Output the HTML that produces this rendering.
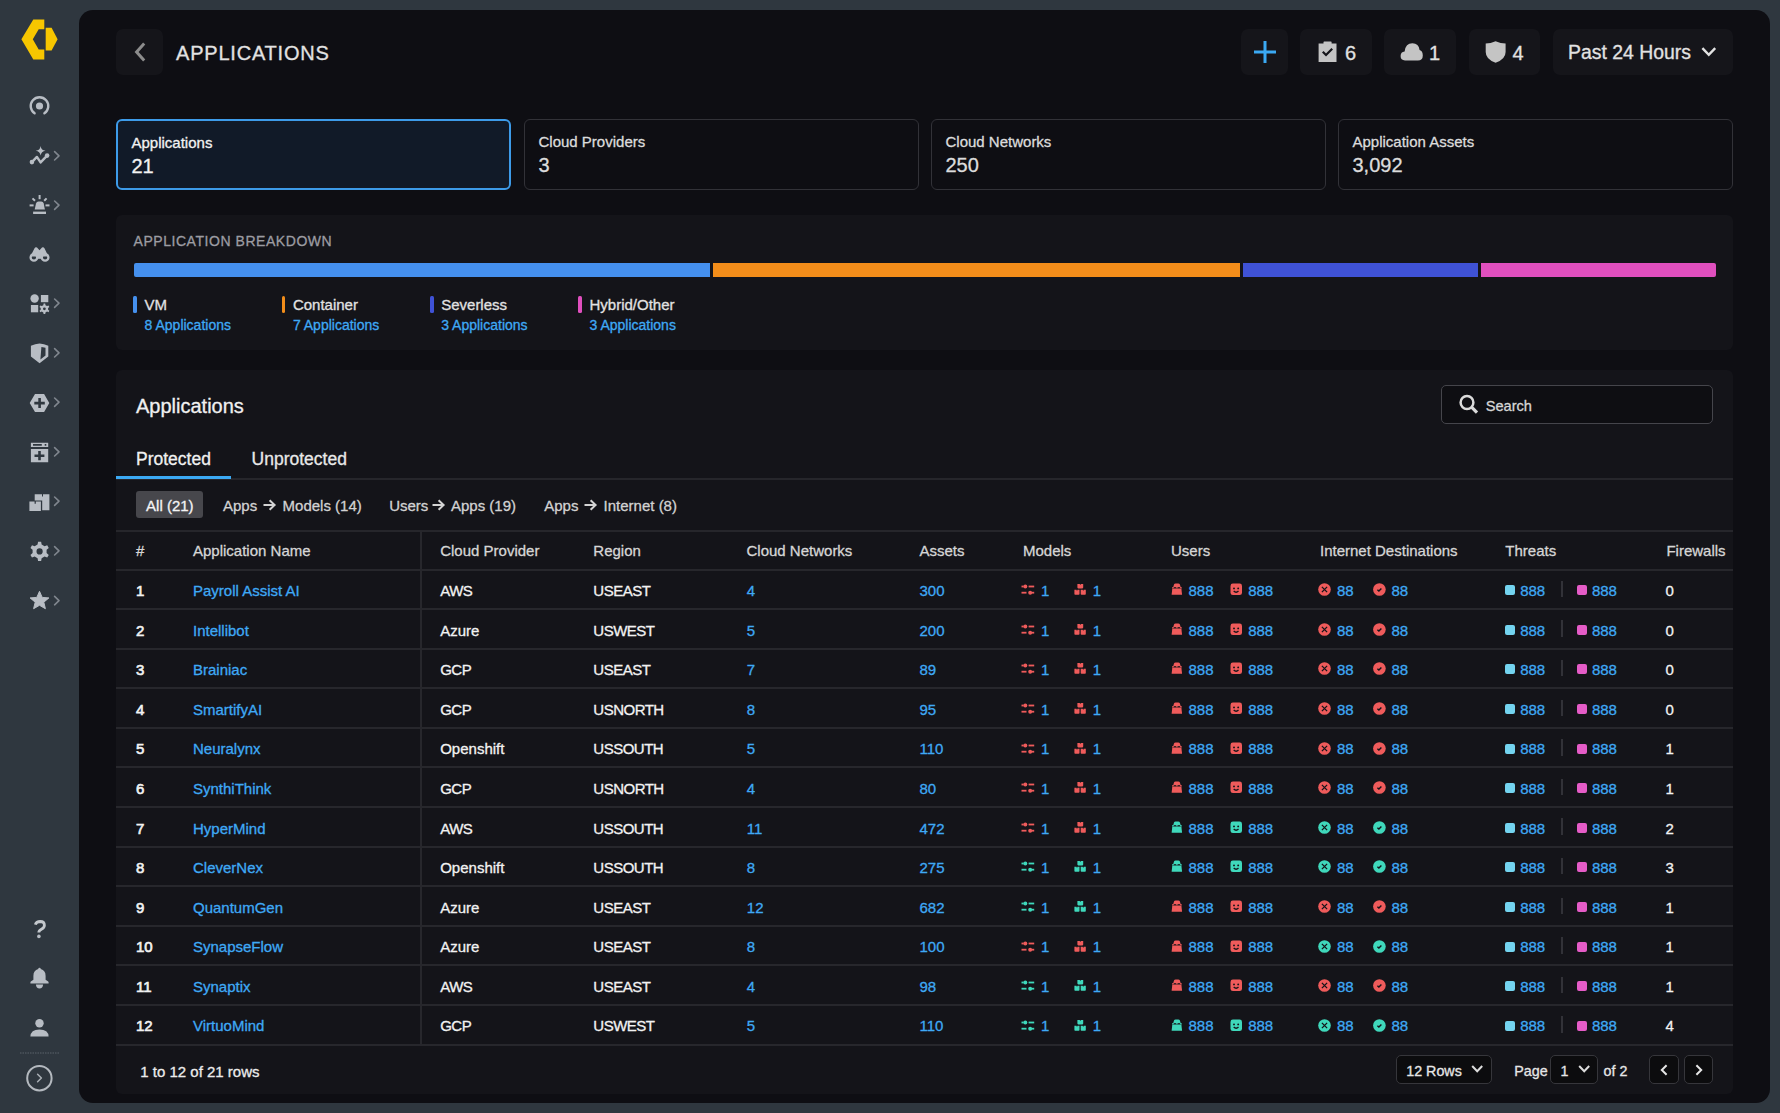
<!DOCTYPE html>
<html><head><meta charset="utf-8">
<style>
*{box-sizing:border-box;margin:0;padding:0}
body{-webkit-text-stroke:0.3px currentColor}
html,body{width:1780px;height:1113px;overflow:hidden;background:#2f373f;font-family:"Liberation Sans",sans-serif;color:#e6e6e6}
.abs{position:absolute}
#main{position:absolute;left:79px;top:10px;width:1691px;height:1093px;background:#0e0e13;border-radius:14px}
.hbtn{position:absolute;top:29px;height:46px;background:#15151a;border-radius:7px}
.htxt{position:absolute;font-size:20px;color:#e2e2e2;line-height:1}
.card{position:absolute;top:118.6px;height:71.8px;width:395px;border:1.5px solid #323238;border-radius:6px;background:#0e0e13}
.card .l{position:absolute;left:13.5px;top:14px;font-size:15px;color:#dcdcdc;line-height:1}
.card .v{position:absolute;left:13.5px;top:35px;font-size:20px;color:#dcdcdc;line-height:1}
.card.sel{border:2px solid #3d9be9;background:#111a28}
.card.sel .l,.card.sel .v{color:#f2f2f2}
.panel{position:absolute;background:#141419;border-radius:6px}
.psel{position:absolute;top:1055px;height:29.3px;border:1.5px solid #36363b;border-radius:5px;background:#0c0c0e}
.ft{top:1064px;font-size:14.3px;line-height:1;color:#e6e6e6;white-space:nowrap}
.chip{top:498px;font-size:15px;line-height:1;color:#d2d2d2;white-space:nowrap}
.th{position:absolute;top:543px;font-size:15px;line-height:1;color:#d6d6d6;white-space:nowrap}
.tr{position:absolute;left:0;width:1780px;height:40px}
.td{position:absolute;top:13.8px;font-size:15px;line-height:1;color:#f2f2f2;white-space:nowrap}
.lk{color:#3fa9f5}
.num{-webkit-text-stroke:0.65px currentColor}
.ic{position:absolute;top:13px;width:14px;height:14px;overflow:visible}
.sq{position:absolute;top:16px;width:10px;height:10px;border-radius:2px}
.dv{position:absolute;left:1561px;top:11.6px;width:1.5px;height:16.4px;background:#323238}
.leg{position:absolute;top:295px;width:140px;height:45px}
.leg i{position:absolute;left:0;top:1px;width:3.6px;height:16.5px;border-radius:1.5px}
.leg b{position:absolute;left:11.2px;top:2px;font-weight:400;font-size:15px;line-height:1;color:#e2e2e2}
.leg s{position:absolute;left:11.2px;top:23px;text-decoration:none;font-size:14px;line-height:1;color:#3fa9f5}

</style></head>
<body>
<svg width="0" height="0" style="position:absolute">
<defs>
<symbol id="i-sl" viewBox="0 0 14 14">
<rect x="0.5" y="3.6" width="2" height="1.8" fill="currentColor"/><circle cx="4.3" cy="4.5" r="2" fill="currentColor"/><rect x="7.6" y="3.6" width="5.6" height="1.8" fill="currentColor"/>
<rect x="0.5" y="9.8" width="5" height="1.8" fill="currentColor"/><circle cx="9.2" cy="10.7" r="2" fill="currentColor"/><rect x="11" y="9.8" width="2.2" height="1.8" fill="currentColor"/>
</symbol>
<symbol id="i-bx" viewBox="0 0 14 14">
<path d="M3.4 1.9 L5.7 1.9 L6.3 3.1 L6.9 1.9 L9.2 1.9 L9.2 5.6 Q9.2 6.4 8.4 6.4 L4.2 6.4 Q3.4 6.4 3.4 5.6Z" fill="currentColor"/>
<path d="M0.4 7.7 L2.5 7.7 L3 8.9 L3.5 7.7 L5.5 7.7 L5.5 11.9 Q5.5 12.7 4.7 12.7 L1.2 12.7 Q0.4 12.7 0.4 11.9Z" fill="currentColor"/>
<path d="M6.7 7.7 L8.7 7.7 L9.2 8.9 L9.7 7.7 L11.8 7.7 L11.8 11.9 Q11.8 12.7 11 12.7 L7.5 12.7 Q6.7 12.7 6.7 11.9Z" fill="currentColor"/>
</symbol>
<symbol id="i-spy" viewBox="0 0 14 14">
<path d="M2.2 5.2 L3 2.6 Q3.4 1.5 4.6 1.5 L7.3 1.5 Q8.5 1.5 8.9 2.6 L9.7 5.2 L10.8 5.3 L10.8 6.6 L1 6.6 L1 5.3Z" fill="currentColor"/>
<path d="M1.3 6.7 L10.4 6.7 L11.1 12.8 L0.6 12.8Z" fill="currentColor"/>
<path d="M2.8 5.7 H5.3 M6.5 5.7 H9" stroke="#141419" stroke-width="1"/>
</symbol>
<symbol id="i-bot" viewBox="0 0 14 14">
<rect x="0.5" y="1.5" width="11.5" height="11.6" rx="2.4" fill="currentColor"/>
<circle cx="4" cy="6.4" r="0.95" fill="#141419"/><circle cx="8.2" cy="6.4" r="0.95" fill="#141419"/>
<path d="M3.7 9 Q6.1 11.4 8.5 9" stroke="#141419" stroke-width="1.3" fill="none"/>
</symbol>
<symbol id="i-x" viewBox="0 0 14 14">
<circle cx="6.5" cy="7.5" r="6.3" fill="currentColor"/>
<path d="M3.9 4.9 L9.1 10.1 M9.1 4.9 L3.9 10.1" stroke="#141419" stroke-width="1.3"/>
</symbol>
<symbol id="i-ok" viewBox="0 0 14 14">
<circle cx="6.4" cy="7.5" r="6.3" fill="currentColor"/>
<path d="M4.4 7.7 L5.9 9 L8.4 6.5" stroke="#141419" stroke-width="1.4" fill="none"/>
</symbol>
</defs></svg>
<!-- SIDEBAR -->
<svg class="abs" style="left:0;top:0" width="80" height="1113" viewBox="0 0 80 1113">
<g fill="#f7c600">
<path d="M21.4 39.2 L33.3 19.4 L44.3 19.4 L44.3 29.3 L38.7 29.3 L32.8 39.2 L38.7 49.6 L44.3 49.6 L44.3 59.5 L33.3 59.5 Z" fill-rule="evenodd"/>
<path d="M45.7 27.8 L51.6 27.8 L57.6 39.2 L51.6 50.6 L45.7 50.6 Z"/>
</g>
<g fill="#b8bdc4" stroke="none">
<!-- radar -->
<path d="M34.6 113.3 A8.8 8.8 0 1 1 44.4 113.3" fill="none" stroke="#b8bdc4" stroke-width="2.4" stroke-linecap="round"/>
<circle cx="39.5" cy="106" r="3.6"/>
<!-- trend sparkle -->
<path d="M40.6 145.9 Q41.2 150.2 45.5 150.8 Q41.2 151.4 40.6 155.6 Q40 151.4 35.8 150.8 Q40 150.2 40.6 145.9Z"/>
<path d="M31.9 162.1 L36.9 156.9 L40.6 162.4 L47.1 155.6" fill="none" stroke="#b8bdc4" stroke-width="2.4" stroke-linejoin="round"/>
<circle cx="31.9" cy="162.1" r="2.3"/><circle cx="47.1" cy="155.6" r="2.3"/>
<!-- alarm -->
<path d="M34.7 209.6 L36 203.5 Q36.5 201.6 38.5 201.6 L41.2 201.6 Q43.2 201.6 43.7 203.5 L44.9 209.6Z"/>
<rect x="33.1" y="211.6" width="12.9" height="2.4"/>
<rect x="38.6" y="195" width="2" height="4.2"/>
<path d="M32.5 198.4 L35 200.8 M46.6 198.4 L44.2 200.8" stroke="#b8bdc4" stroke-width="2"/>
<rect x="29.6" y="204.4" width="4" height="2"/><rect x="45.5" y="204.4" width="4" height="2"/>
<!-- binoculars -->
<path d="M30.6 256 L34.4 248.4 Q35.4 246.6 37 247.4 L39.5 250.2 L42 247.4 Q43.6 246.6 44.6 248.4 L48.4 256.5 L30.6 256.5Z"/>
<path d="M36.6 254 L42.4 254 L42.4 258.8 L36.6 258.8Z"/>
<circle cx="33.9" cy="257.4" r="3.3" fill="none" stroke="#b8bdc4" stroke-width="2.3"/>
<circle cx="45.1" cy="257.4" r="3.3" fill="none" stroke="#b8bdc4" stroke-width="2.3"/>
<!-- shapes gear -->
<circle cx="34.6" cy="298.5" r="4.2"/>
<rect x="40.9" y="295" width="7.4" height="7.2"/>
<rect x="30.9" y="305" width="7.3" height="7.3"/>
<path d="M43.32 305.16 L43.57 303.57 L45.23 303.57 L45.48 305.16 L47.02 306.04 L48.52 305.46 L49.35 306.90 L48.10 307.91 L48.10 309.69 L49.35 310.70 L48.52 312.14 L47.02 311.56 L45.48 312.44 L45.23 314.03 L43.57 314.03 L43.32 312.44 L41.78 311.56 L40.28 312.14 L39.45 310.70 L40.70 309.69 L40.70 307.91 L39.45 306.90 L40.28 305.46 L41.78 306.04Z M44.4 307.4 A1.4 1.4 0 1 0 44.4 310.2 A1.4 1.4 0 1 0 44.4 307.4Z" fill-rule="evenodd"/>
<!-- shield -->
<path d="M39.6 343.6 Q44 344 48.3 345.8 L48.3 356.6 L39.6 363.2 L30.9 356.6 L30.9 345.8 Q35.2 344 39.6 343.6Z M41.4 346.9 L45.5 347.7 L45.5 355.5 L40.4 359.6Z" fill-rule="evenodd"/>
<!-- hex plus -->
<path d="M29.7 403.1 L35 393.9 L44.1 393.9 L49.3 403.1 L44.1 412 L35 412Z M38.3 398 L40.9 398 L40.9 401.8 L44.8 401.8 L44.8 404.4 L40.9 404.4 L40.9 408 L38.3 408 L38.3 404.4 L34.3 404.4 L34.3 401.8 L38.3 401.8Z" fill-rule="evenodd"/>
<!-- window plus -->
<path d="M30.9 442.7 L48.2 442.7 L48.2 447.1 L30.9 447.1Z M33 444.1 L41.8 444.1 L41.8 445.7 L33 445.7Z M44.7 444.1 L46.3 444.1 L46.3 445.7 L44.7 445.7Z" fill-rule="evenodd"/>
<path d="M30.9 449.1 L48.2 449.1 L48.2 462.3 L30.9 462.3Z M38.2 451 L40.8 451 L40.8 454.4 L44.4 454.4 L44.4 457 L40.8 457 L40.8 460.3 L38.2 460.3 L38.2 457 L34.5 457 L34.5 454.4 L38.2 454.4Z" fill-rule="evenodd"/>
<!-- boxes -->
<path d="M34.7 494.3 L42 494.3 L42 496.5 L43 496.5 L43 494.3 L49.4 494.3 L49.4 510.3 L42.2 510.3 L42.2 500.6 L34.7 500.6Z"/>
<path d="M29.4 501.6 L34.6 501.6 L34.6 503.8 L35.8 503.8 L35.8 501.6 L40.9 501.6 L40.9 511 L29.4 511Z"/>
<!-- gear -->
<path d="M37.56 544.50 L38.07 541.72 L41.13 541.72 L41.64 544.50 L44.56 546.18 L47.22 545.23 L48.75 547.89 L46.60 549.72 L46.60 553.08 L48.75 554.91 L47.22 557.57 L44.56 556.62 L41.64 558.30 L41.13 561.08 L38.07 561.08 L37.56 558.30 L34.64 556.62 L31.98 557.57 L30.45 554.91 L32.60 553.08 L32.60 549.72 L30.45 547.89 L31.98 545.23 L34.64 546.18Z M39.6 548.3 A3.1 3.1 0 1 0 39.6 554.5 A3.1 3.1 0 1 0 39.6 548.3Z" fill-rule="evenodd"/>
<!-- star -->
<path d="M39.5 591.3 L42.2 597.4 L48.9 597.9 L43.8 602.2 L45.4 608.7 L39.5 605.3 L33.6 608.7 L35.2 602.2 L30.1 597.9 L36.8 597.4Z" stroke="#b8bdc4" stroke-width="1" stroke-linejoin="round"/>
<!-- help -->
<path d="M35.3 924.6 Q36.4 921.5 40.2 921.5 Q44.4 921.6 44.4 925.2 Q44.4 927.6 41.4 929.2 Q38.8 930.6 38.8 932.6" fill="none" stroke="#c4c8cd" stroke-width="2.8" stroke-linecap="butt"/>
<circle cx="38.9" cy="936.4" r="1.8"/>
<!-- bell -->
<path d="M39.5 967.8 Q40.6 967.8 40.8 969.1 Q45.6 970.4 45.6 976 L45.6 979.8 L48.2 981.6 Q48.6 982 48.6 982.6 L48.6 983.6 L30.4 983.6 L30.4 982.6 Q30.4 982 30.8 981.6 L33.4 979.8 L33.4 976 Q33.4 970.4 38.2 969.1 Q38.4 967.8 39.5 967.8Z"/>
<path d="M35.9 984.6 L43.1 984.6 Q42.8 988.5 39.5 988.5 Q36.2 988.5 35.9 984.6Z"/>
<!-- user -->
<circle cx="39.5" cy="1023.3" r="4.2"/>
<path d="M30.4 1036.6 Q30.6 1029.4 39.5 1029.4 Q48.4 1029.4 48.6 1036.6Z"/>
</g>
<!-- chevrons -->
<g fill="none" stroke="#80868e" stroke-width="1.6" stroke-linecap="round" stroke-linejoin="round">
<path d="M54.6 151.6 L59 155.8 L54.6 160"/>
<path d="M54.6 201 L59 205.2 L54.6 209.4"/>
<path d="M54.6 299 L59 303.2 L54.6 307.4"/>
<path d="M54.6 348.6 L59 352.8 L54.6 357"/>
<path d="M54.6 398 L59 402.2 L54.6 406.4"/>
<path d="M54.6 447.6 L59 451.8 L54.6 456"/>
<path d="M54.6 497 L59 501.2 L54.6 505.4"/>
<path d="M54.6 546.6 L59 550.8 L54.6 555"/>
<path d="M54.6 596.4 L59 600.6 L54.6 604.8"/>
</g>
<line x1="20" y1="1053" x2="59.5" y2="1053" stroke="#5b636b" stroke-width="1" stroke-dasharray="1.5 1"/>
<circle cx="39.4" cy="1078.2" r="12.2" fill="none" stroke="#b4b9bf" stroke-width="2"/>
<path d="M37.6 1074.2 L41.4 1078 L37.6 1081.8" fill="none" stroke="#aab0b6" stroke-width="1.5" stroke-linecap="round" stroke-linejoin="round"/>
</svg>

<!-- MAIN -->
<div id="main"></div>

<!-- header -->
<div class="hbtn" style="left:116px;width:47px"></div>
<svg class="abs" style="left:130px;top:40px" width="20" height="24" viewBox="0 0 20 24"><path d="M14.2 3.6 L6.6 12 L14.2 20.4" stroke="#8c8c8c" stroke-width="3" fill="none"/></svg>
<div class="htxt" style="left:176px;top:43px;letter-spacing:0.8px">APPLICATIONS</div>

<div class="hbtn" style="left:1241px;width:47px"></div>
<svg class="abs" style="left:1253px;top:40px" width="24" height="24" viewBox="0 0 24 24"><path d="M12 1 V23 M1 12 H23" stroke="#3ba9f3" stroke-width="3" fill="none"/></svg>

<div class="hbtn" style="left:1300px;width:72px"></div>
<div class="hbtn" style="left:1384px;width:72px"></div>
<div class="hbtn" style="left:1469px;width:71px"></div>
<div class="hbtn" style="left:1553px;width:180px"></div>
<svg class="abs" style="left:0;top:0;overflow:visible" width="1" height="1">
<g fill="#c4c4c4">
<path d="M1318.6 43.5 L1323.5 43.5 L1323.5 42 Q1323.5 41.4 1324.2 41.4 L1330.9 41.4 Q1331.6 41.4 1331.6 42 L1331.6 43.5 L1336.5 43.5 L1336.5 62 L1318.6 62Z M1322 52.6 L1326 56.6 L1333 49.6 L1331.4 48 L1326 53.4 L1323.6 51Z" fill-rule="evenodd"/>
<path d="M1405 60.4 Q1400.6 60.4 1400.6 56 Q1400.6 51.8 1404.6 51.4 Q1405.6 43.2 1412.4 43.2 Q1418.8 43.2 1419.6 50 Q1422.8 51 1422.8 55.4 Q1422.8 60.4 1417.8 60.4Z"/>
<path d="M1495.6 41.2 Q1500.6 43.4 1505.6 43.6 L1505.6 52 Q1505.6 59.4 1495.6 62.7 Q1485.7 59.4 1485.7 52 L1485.7 43.6 Q1490.6 43.4 1495.6 41.2Z"/>
</g>
</svg>
<div class="htxt" style="left:1345px;top:43px">6</div>
<div class="htxt" style="left:1429px;top:43px">1</div>
<div class="htxt" style="left:1512.5px;top:43px">4</div>
<div class="htxt" style="left:1568px;top:43px;font-size:19.4px">Past 24 Hours</div>
<svg class="abs" style="left:1700px;top:45px" width="18" height="14" viewBox="0 0 18 14"><path d="M2.4 3.2 L8.8 9.8 L15.2 3.2" stroke="#e2e2e2" stroke-width="2.4" fill="none"/></svg>

<!-- cards -->
<div class="card sel" style="left:116px"><div class="l">Applications</div><div class="v">21</div></div>
<div class="card" style="left:524px"><div class="l">Cloud Providers</div><div class="v">3</div></div>
<div class="card" style="left:931px"><div class="l">Cloud Networks</div><div class="v">250</div></div>
<div class="card" style="left:1338px"><div class="l">Application Assets</div><div class="v">3,092</div></div>

<!-- breakdown -->
<div class="panel" style="left:116px;top:215px;width:1617px;height:135px"></div>
<div class="abs" style="left:133.5px;top:234px;font-size:14px;line-height:1;letter-spacing:0.55px;color:#9c9ca2">APPLICATION BREAKDOWN</div>
<div class="abs" style="left:133.5px;top:263.2px;width:576.5px;height:13.6px;background:#4590ee;border-radius:2px 0 0 2px"></div>
<div class="abs" style="left:713px;top:263.2px;width:527px;height:13.6px;background:#f28d1a"></div>
<div class="abs" style="left:1243px;top:263.2px;width:235px;height:13.6px;background:#3f52d6"></div>
<div class="abs" style="left:1481.3px;top:263.2px;width:234.5px;height:13.6px;background:#e04fbe;border-radius:0 2px 2px 0"></div>
<div class="leg" style="left:133.4px"><i style="background:#4590ee"></i><b>VM</b><s>8 Applications</s></div>
<div class="leg" style="left:281.7px"><i style="background:#f28d1a"></i><b>Container</b><s>7 Applications</s></div>
<div class="leg" style="left:430px"><i style="background:#3f52d6"></i><b>Severless</b><s>3 Applications</s></div>
<div class="leg" style="left:578.3px"><i style="background:#e04fbe"></i><b>Hybrid/Other</b><s>3 Applications</s></div>

<!-- applications panel -->
<div class="panel" style="left:116px;top:370px;width:1617px;height:724px"></div>
<div class="abs" style="left:136px;top:395.5px;font-size:20px;line-height:1;color:#f0f0f0">Applications</div>
<div class="abs" style="left:1441.2px;top:384.6px;width:272px;height:39.6px;border:1.5px solid #45454b;border-radius:5px;background:#0e0e12"></div>
<svg class="abs" style="left:1455px;top:391px" width="28" height="28" viewBox="0 0 28 28"><circle cx="12" cy="11.5" r="6.4" fill="none" stroke="#dadada" stroke-width="2.5"/><path d="M16.6 16.2 L22 21.6" stroke="#dadada" stroke-width="3.2" stroke-linecap="butt"/></svg>
<div class="abs" style="left:1485.7px;top:398.5px;font-size:14.6px;line-height:1;color:#d6d6d6">Search</div>
<div class="abs" style="left:116px;top:478px;width:1617px;height:1.5px;background:#26262b"></div>
<div class="abs" style="left:116px;top:476px;width:115px;height:3px;background:#3ba9f3"></div>
<div class="abs" style="left:136px;top:451px;font-size:17.5px;line-height:1;color:#f0f0f0">Protected</div>
<div class="abs" style="left:251.6px;top:451px;font-size:17.5px;line-height:1;color:#e8e8e8">Unprotected</div>
<div class="abs" style="left:136.2px;top:491px;width:66.5px;height:27.2px;background:#47474c;border-radius:3px"></div>
<div class="abs chip" style="left:146.1px;color:#f4f4f4">All (21)</div>
<div class="abs chip" style="left:223px">Apps</div><svg class="abs" style="left:262.8px;top:499px" width="14" height="12" viewBox="0 0 14 12"><path d="M0.5 6 H11.5 M6.6 1.2 L11.6 6 L6.6 10.8" stroke="#d4d4d4" stroke-width="2" fill="none"/></svg><div class="abs chip" style="left:282.6px">Models (14)</div>
<div class="abs chip" style="left:389.2px">Users</div><svg class="abs" style="left:432px;top:499px" width="14" height="12" viewBox="0 0 14 12"><path d="M0.5 6 H11.5 M6.6 1.2 L11.6 6 L6.6 10.8" stroke="#d4d4d4" stroke-width="2" fill="none"/></svg><div class="abs chip" style="left:451px">Apps (19)</div>
<div class="abs chip" style="left:544.2px">Apps</div><svg class="abs" style="left:584px;top:499px" width="14" height="12" viewBox="0 0 14 12"><path d="M0.5 6 H11.5 M6.6 1.2 L11.6 6 L6.6 10.8" stroke="#d4d4d4" stroke-width="2" fill="none"/></svg><div class="abs chip" style="left:603.6px">Internet (8)</div>
<div class="abs" style="left:116px;top:530px;width:1617px;height:1.6px;background:#26262b"></div>
<div class="abs" style="left:116px;top:568.50px;width:1617px;height:2px;background:#27272c"></div>
<div class="abs" style="left:116px;top:608.08px;width:1617px;height:2px;background:#27272c"></div>
<div class="abs" style="left:116px;top:647.67px;width:1617px;height:2px;background:#27272c"></div>
<div class="abs" style="left:116px;top:687.25px;width:1617px;height:2px;background:#27272c"></div>
<div class="abs" style="left:116px;top:726.83px;width:1617px;height:2px;background:#27272c"></div>
<div class="abs" style="left:116px;top:766.41px;width:1617px;height:2px;background:#27272c"></div>
<div class="abs" style="left:116px;top:806.00px;width:1617px;height:2px;background:#27272c"></div>
<div class="abs" style="left:116px;top:845.58px;width:1617px;height:2px;background:#27272c"></div>
<div class="abs" style="left:116px;top:885.16px;width:1617px;height:2px;background:#27272c"></div>
<div class="abs" style="left:116px;top:924.75px;width:1617px;height:2px;background:#27272c"></div>
<div class="abs" style="left:116px;top:964.33px;width:1617px;height:2px;background:#27272c"></div>
<div class="abs" style="left:116px;top:1003.91px;width:1617px;height:2px;background:#27272c"></div>
<div class="abs" style="left:116px;top:1043.50px;width:1617px;height:2px;background:#27272c"></div>
<div class="abs" style="left:420px;top:531px;width:2px;height:513.5px;background:#27272c"></div>
<div class="th" style="left:136px">#</div>
<div class="th" style="left:193px">Application Name</div>
<div class="th" style="left:440.2px">Cloud Provider</div>
<div class="th" style="left:593.3px">Region</div>
<div class="th" style="left:746.5px">Cloud Networks</div>
<div class="th" style="left:919.5px">Assets</div>
<div class="th" style="left:1023px">Models</div>
<div class="th" style="left:1171px">Users</div>
<div class="th" style="left:1320px">Internet Destinations</div>
<div class="th" style="left:1505.3px">Threats</div>
<div class="th" style="left:1666.4px">Firewalls</div>
<div class="tr" style="top:569.29px"><span class="td num" style="left:136px">1</span><span class="td lk" style="left:193px">Payroll Assist AI</span><span class="td" style="left:440.2px;letter-spacing:-0.5px">AWS</span><span class="td" style="left:593.3px;letter-spacing:-0.5px">USEAST</span><span class="td lk" style="left:746.8px">4</span><span class="td lk" style="left:919.5px">300</span><svg class="ic" style="left:1021px;color:#ef5b5b"><use href="#i-sl"/></svg><span class="td lk" style="left:1041px">1</span><svg class="ic" style="left:1073.5px;color:#ef5b5b"><use href="#i-bx"/></svg><span class="td lk" style="left:1092.8px">1</span><svg class="ic" style="left:1170.5px;color:#ef5b5b"><use href="#i-spy"/></svg><span class="td lk" style="left:1188.5px">888</span><svg class="ic" style="left:1229.5px;color:#ef5b5b"><use href="#i-bot"/></svg><span class="td lk" style="left:1248.2px">888</span><svg class="ic" style="left:1318px;color:#ef5b5b"><use href="#i-x"/></svg><span class="td lk" style="left:1337px">88</span><svg class="ic" style="left:1372.5px;color:#ef5b5b"><use href="#i-ok"/></svg><span class="td lk" style="left:1391.4px">88</span><span class="sq" style="left:1505px;background:#74d4f0"></span><span class="td lk" style="left:1520.2px">888</span><span class="dv"></span><span class="sq" style="left:1576.6px;background:#e55cc7"></span><span class="td lk" style="left:1591.9px">888</span><span class="td" style="left:1665.4px">0</span></div>
<div class="tr" style="top:608.87px"><span class="td num" style="left:136px">2</span><span class="td lk" style="left:193px">Intellibot</span><span class="td" style="left:440.2px">Azure</span><span class="td" style="left:593.3px;letter-spacing:-0.5px">USWEST</span><span class="td lk" style="left:746.8px">5</span><span class="td lk" style="left:919.5px">200</span><svg class="ic" style="left:1021px;color:#ef5b5b"><use href="#i-sl"/></svg><span class="td lk" style="left:1041px">1</span><svg class="ic" style="left:1073.5px;color:#ef5b5b"><use href="#i-bx"/></svg><span class="td lk" style="left:1092.8px">1</span><svg class="ic" style="left:1170.5px;color:#ef5b5b"><use href="#i-spy"/></svg><span class="td lk" style="left:1188.5px">888</span><svg class="ic" style="left:1229.5px;color:#ef5b5b"><use href="#i-bot"/></svg><span class="td lk" style="left:1248.2px">888</span><svg class="ic" style="left:1318px;color:#ef5b5b"><use href="#i-x"/></svg><span class="td lk" style="left:1337px">88</span><svg class="ic" style="left:1372.5px;color:#ef5b5b"><use href="#i-ok"/></svg><span class="td lk" style="left:1391.4px">88</span><span class="sq" style="left:1505px;background:#74d4f0"></span><span class="td lk" style="left:1520.2px">888</span><span class="dv"></span><span class="sq" style="left:1576.6px;background:#e55cc7"></span><span class="td lk" style="left:1591.9px">888</span><span class="td" style="left:1665.4px">0</span></div>
<div class="tr" style="top:648.46px"><span class="td num" style="left:136px">3</span><span class="td lk" style="left:193px">Brainiac</span><span class="td" style="left:440.2px;letter-spacing:-0.5px">GCP</span><span class="td" style="left:593.3px;letter-spacing:-0.5px">USEAST</span><span class="td lk" style="left:746.8px">7</span><span class="td lk" style="left:919.5px">89</span><svg class="ic" style="left:1021px;color:#ef5b5b"><use href="#i-sl"/></svg><span class="td lk" style="left:1041px">1</span><svg class="ic" style="left:1073.5px;color:#ef5b5b"><use href="#i-bx"/></svg><span class="td lk" style="left:1092.8px">1</span><svg class="ic" style="left:1170.5px;color:#ef5b5b"><use href="#i-spy"/></svg><span class="td lk" style="left:1188.5px">888</span><svg class="ic" style="left:1229.5px;color:#ef5b5b"><use href="#i-bot"/></svg><span class="td lk" style="left:1248.2px">888</span><svg class="ic" style="left:1318px;color:#ef5b5b"><use href="#i-x"/></svg><span class="td lk" style="left:1337px">88</span><svg class="ic" style="left:1372.5px;color:#ef5b5b"><use href="#i-ok"/></svg><span class="td lk" style="left:1391.4px">88</span><span class="sq" style="left:1505px;background:#74d4f0"></span><span class="td lk" style="left:1520.2px">888</span><span class="dv"></span><span class="sq" style="left:1576.6px;background:#e55cc7"></span><span class="td lk" style="left:1591.9px">888</span><span class="td" style="left:1665.4px">0</span></div>
<div class="tr" style="top:688.04px"><span class="td num" style="left:136px">4</span><span class="td lk" style="left:193px">SmartifyAI</span><span class="td" style="left:440.2px;letter-spacing:-0.5px">GCP</span><span class="td" style="left:593.3px;letter-spacing:-0.5px">USNORTH</span><span class="td lk" style="left:746.8px">8</span><span class="td lk" style="left:919.5px">95</span><svg class="ic" style="left:1021px;color:#ef5b5b"><use href="#i-sl"/></svg><span class="td lk" style="left:1041px">1</span><svg class="ic" style="left:1073.5px;color:#ef5b5b"><use href="#i-bx"/></svg><span class="td lk" style="left:1092.8px">1</span><svg class="ic" style="left:1170.5px;color:#ef5b5b"><use href="#i-spy"/></svg><span class="td lk" style="left:1188.5px">888</span><svg class="ic" style="left:1229.5px;color:#ef5b5b"><use href="#i-bot"/></svg><span class="td lk" style="left:1248.2px">888</span><svg class="ic" style="left:1318px;color:#ef5b5b"><use href="#i-x"/></svg><span class="td lk" style="left:1337px">88</span><svg class="ic" style="left:1372.5px;color:#ef5b5b"><use href="#i-ok"/></svg><span class="td lk" style="left:1391.4px">88</span><span class="sq" style="left:1505px;background:#74d4f0"></span><span class="td lk" style="left:1520.2px">888</span><span class="dv"></span><span class="sq" style="left:1576.6px;background:#e55cc7"></span><span class="td lk" style="left:1591.9px">888</span><span class="td" style="left:1665.4px">0</span></div>
<div class="tr" style="top:727.62px"><span class="td num" style="left:136px">5</span><span class="td lk" style="left:193px">Neuralynx</span><span class="td" style="left:440.2px">Openshift</span><span class="td" style="left:593.3px;letter-spacing:-0.5px">USSOUTH</span><span class="td lk" style="left:746.8px">5</span><span class="td lk" style="left:919.5px">110</span><svg class="ic" style="left:1021px;color:#ef5b5b"><use href="#i-sl"/></svg><span class="td lk" style="left:1041px">1</span><svg class="ic" style="left:1073.5px;color:#ef5b5b"><use href="#i-bx"/></svg><span class="td lk" style="left:1092.8px">1</span><svg class="ic" style="left:1170.5px;color:#ef5b5b"><use href="#i-spy"/></svg><span class="td lk" style="left:1188.5px">888</span><svg class="ic" style="left:1229.5px;color:#ef5b5b"><use href="#i-bot"/></svg><span class="td lk" style="left:1248.2px">888</span><svg class="ic" style="left:1318px;color:#ef5b5b"><use href="#i-x"/></svg><span class="td lk" style="left:1337px">88</span><svg class="ic" style="left:1372.5px;color:#ef5b5b"><use href="#i-ok"/></svg><span class="td lk" style="left:1391.4px">88</span><span class="sq" style="left:1505px;background:#74d4f0"></span><span class="td lk" style="left:1520.2px">888</span><span class="dv"></span><span class="sq" style="left:1576.6px;background:#e55cc7"></span><span class="td lk" style="left:1591.9px">888</span><span class="td" style="left:1665.4px">1</span></div>
<div class="tr" style="top:767.21px"><span class="td num" style="left:136px">6</span><span class="td lk" style="left:193px">SynthiThink</span><span class="td" style="left:440.2px;letter-spacing:-0.5px">GCP</span><span class="td" style="left:593.3px;letter-spacing:-0.5px">USNORTH</span><span class="td lk" style="left:746.8px">4</span><span class="td lk" style="left:919.5px">80</span><svg class="ic" style="left:1021px;color:#ef5b5b"><use href="#i-sl"/></svg><span class="td lk" style="left:1041px">1</span><svg class="ic" style="left:1073.5px;color:#ef5b5b"><use href="#i-bx"/></svg><span class="td lk" style="left:1092.8px">1</span><svg class="ic" style="left:1170.5px;color:#ef5b5b"><use href="#i-spy"/></svg><span class="td lk" style="left:1188.5px">888</span><svg class="ic" style="left:1229.5px;color:#ef5b5b"><use href="#i-bot"/></svg><span class="td lk" style="left:1248.2px">888</span><svg class="ic" style="left:1318px;color:#ef5b5b"><use href="#i-x"/></svg><span class="td lk" style="left:1337px">88</span><svg class="ic" style="left:1372.5px;color:#ef5b5b"><use href="#i-ok"/></svg><span class="td lk" style="left:1391.4px">88</span><span class="sq" style="left:1505px;background:#74d4f0"></span><span class="td lk" style="left:1520.2px">888</span><span class="dv"></span><span class="sq" style="left:1576.6px;background:#e55cc7"></span><span class="td lk" style="left:1591.9px">888</span><span class="td" style="left:1665.4px">1</span></div>
<div class="tr" style="top:806.79px"><span class="td num" style="left:136px">7</span><span class="td lk" style="left:193px">HyperMind</span><span class="td" style="left:440.2px;letter-spacing:-0.5px">AWS</span><span class="td" style="left:593.3px;letter-spacing:-0.5px">USSOUTH</span><span class="td lk" style="left:746.8px">11</span><span class="td lk" style="left:919.5px">472</span><svg class="ic" style="left:1021px;color:#ef5b5b"><use href="#i-sl"/></svg><span class="td lk" style="left:1041px">1</span><svg class="ic" style="left:1073.5px;color:#ef5b5b"><use href="#i-bx"/></svg><span class="td lk" style="left:1092.8px">1</span><svg class="ic" style="left:1170.5px;color:#3fd8bb"><use href="#i-spy"/></svg><span class="td lk" style="left:1188.5px">888</span><svg class="ic" style="left:1229.5px;color:#3fd8bb"><use href="#i-bot"/></svg><span class="td lk" style="left:1248.2px">888</span><svg class="ic" style="left:1318px;color:#3fd8bb"><use href="#i-x"/></svg><span class="td lk" style="left:1337px">88</span><svg class="ic" style="left:1372.5px;color:#3fd8bb"><use href="#i-ok"/></svg><span class="td lk" style="left:1391.4px">88</span><span class="sq" style="left:1505px;background:#74d4f0"></span><span class="td lk" style="left:1520.2px">888</span><span class="dv"></span><span class="sq" style="left:1576.6px;background:#e55cc7"></span><span class="td lk" style="left:1591.9px">888</span><span class="td" style="left:1665.4px">2</span></div>
<div class="tr" style="top:846.37px"><span class="td num" style="left:136px">8</span><span class="td lk" style="left:193px">CleverNex</span><span class="td" style="left:440.2px">Openshift</span><span class="td" style="left:593.3px;letter-spacing:-0.5px">USSOUTH</span><span class="td lk" style="left:746.8px">8</span><span class="td lk" style="left:919.5px">275</span><svg class="ic" style="left:1021px;color:#3fd8bb"><use href="#i-sl"/></svg><span class="td lk" style="left:1041px">1</span><svg class="ic" style="left:1073.5px;color:#3fd8bb"><use href="#i-bx"/></svg><span class="td lk" style="left:1092.8px">1</span><svg class="ic" style="left:1170.5px;color:#3fd8bb"><use href="#i-spy"/></svg><span class="td lk" style="left:1188.5px">888</span><svg class="ic" style="left:1229.5px;color:#3fd8bb"><use href="#i-bot"/></svg><span class="td lk" style="left:1248.2px">888</span><svg class="ic" style="left:1318px;color:#3fd8bb"><use href="#i-x"/></svg><span class="td lk" style="left:1337px">88</span><svg class="ic" style="left:1372.5px;color:#3fd8bb"><use href="#i-ok"/></svg><span class="td lk" style="left:1391.4px">88</span><span class="sq" style="left:1505px;background:#74d4f0"></span><span class="td lk" style="left:1520.2px">888</span><span class="dv"></span><span class="sq" style="left:1576.6px;background:#e55cc7"></span><span class="td lk" style="left:1591.9px">888</span><span class="td" style="left:1665.4px">3</span></div>
<div class="tr" style="top:885.96px"><span class="td num" style="left:136px">9</span><span class="td lk" style="left:193px">QuantumGen</span><span class="td" style="left:440.2px">Azure</span><span class="td" style="left:593.3px;letter-spacing:-0.5px">USEAST</span><span class="td lk" style="left:746.8px">12</span><span class="td lk" style="left:919.5px">682</span><svg class="ic" style="left:1021px;color:#3fd8bb"><use href="#i-sl"/></svg><span class="td lk" style="left:1041px">1</span><svg class="ic" style="left:1073.5px;color:#3fd8bb"><use href="#i-bx"/></svg><span class="td lk" style="left:1092.8px">1</span><svg class="ic" style="left:1170.5px;color:#ef5b5b"><use href="#i-spy"/></svg><span class="td lk" style="left:1188.5px">888</span><svg class="ic" style="left:1229.5px;color:#ef5b5b"><use href="#i-bot"/></svg><span class="td lk" style="left:1248.2px">888</span><svg class="ic" style="left:1318px;color:#ef5b5b"><use href="#i-x"/></svg><span class="td lk" style="left:1337px">88</span><svg class="ic" style="left:1372.5px;color:#ef5b5b"><use href="#i-ok"/></svg><span class="td lk" style="left:1391.4px">88</span><span class="sq" style="left:1505px;background:#74d4f0"></span><span class="td lk" style="left:1520.2px">888</span><span class="dv"></span><span class="sq" style="left:1576.6px;background:#e55cc7"></span><span class="td lk" style="left:1591.9px">888</span><span class="td" style="left:1665.4px">1</span></div>
<div class="tr" style="top:925.54px"><span class="td num" style="left:136px">10</span><span class="td lk" style="left:193px">SynapseFlow</span><span class="td" style="left:440.2px">Azure</span><span class="td" style="left:593.3px;letter-spacing:-0.5px">USEAST</span><span class="td lk" style="left:746.8px">8</span><span class="td lk" style="left:919.5px">100</span><svg class="ic" style="left:1021px;color:#ef5b5b"><use href="#i-sl"/></svg><span class="td lk" style="left:1041px">1</span><svg class="ic" style="left:1073.5px;color:#ef5b5b"><use href="#i-bx"/></svg><span class="td lk" style="left:1092.8px">1</span><svg class="ic" style="left:1170.5px;color:#ef5b5b"><use href="#i-spy"/></svg><span class="td lk" style="left:1188.5px">888</span><svg class="ic" style="left:1229.5px;color:#ef5b5b"><use href="#i-bot"/></svg><span class="td lk" style="left:1248.2px">888</span><svg class="ic" style="left:1318px;color:#3fd8bb"><use href="#i-x"/></svg><span class="td lk" style="left:1337px">88</span><svg class="ic" style="left:1372.5px;color:#3fd8bb"><use href="#i-ok"/></svg><span class="td lk" style="left:1391.4px">88</span><span class="sq" style="left:1505px;background:#74d4f0"></span><span class="td lk" style="left:1520.2px">888</span><span class="dv"></span><span class="sq" style="left:1576.6px;background:#e55cc7"></span><span class="td lk" style="left:1591.9px">888</span><span class="td" style="left:1665.4px">1</span></div>
<div class="tr" style="top:965.12px"><span class="td num" style="left:136px">11</span><span class="td lk" style="left:193px">Synaptix</span><span class="td" style="left:440.2px;letter-spacing:-0.5px">AWS</span><span class="td" style="left:593.3px;letter-spacing:-0.5px">USEAST</span><span class="td lk" style="left:746.8px">4</span><span class="td lk" style="left:919.5px">98</span><svg class="ic" style="left:1021px;color:#3fd8bb"><use href="#i-sl"/></svg><span class="td lk" style="left:1041px">1</span><svg class="ic" style="left:1073.5px;color:#3fd8bb"><use href="#i-bx"/></svg><span class="td lk" style="left:1092.8px">1</span><svg class="ic" style="left:1170.5px;color:#ef5b5b"><use href="#i-spy"/></svg><span class="td lk" style="left:1188.5px">888</span><svg class="ic" style="left:1229.5px;color:#ef5b5b"><use href="#i-bot"/></svg><span class="td lk" style="left:1248.2px">888</span><svg class="ic" style="left:1318px;color:#ef5b5b"><use href="#i-x"/></svg><span class="td lk" style="left:1337px">88</span><svg class="ic" style="left:1372.5px;color:#ef5b5b"><use href="#i-ok"/></svg><span class="td lk" style="left:1391.4px">88</span><span class="sq" style="left:1505px;background:#74d4f0"></span><span class="td lk" style="left:1520.2px">888</span><span class="dv"></span><span class="sq" style="left:1576.6px;background:#e55cc7"></span><span class="td lk" style="left:1591.9px">888</span><span class="td" style="left:1665.4px">1</span></div>
<div class="tr" style="top:1004.70px"><span class="td num" style="left:136px">12</span><span class="td lk" style="left:193px">VirtuoMind</span><span class="td" style="left:440.2px;letter-spacing:-0.5px">GCP</span><span class="td" style="left:593.3px;letter-spacing:-0.5px">USWEST</span><span class="td lk" style="left:746.8px">5</span><span class="td lk" style="left:919.5px">110</span><svg class="ic" style="left:1021px;color:#3fd8bb"><use href="#i-sl"/></svg><span class="td lk" style="left:1041px">1</span><svg class="ic" style="left:1073.5px;color:#3fd8bb"><use href="#i-bx"/></svg><span class="td lk" style="left:1092.8px">1</span><svg class="ic" style="left:1170.5px;color:#3fd8bb"><use href="#i-spy"/></svg><span class="td lk" style="left:1188.5px">888</span><svg class="ic" style="left:1229.5px;color:#3fd8bb"><use href="#i-bot"/></svg><span class="td lk" style="left:1248.2px">888</span><svg class="ic" style="left:1318px;color:#3fd8bb"><use href="#i-x"/></svg><span class="td lk" style="left:1337px">88</span><svg class="ic" style="left:1372.5px;color:#3fd8bb"><use href="#i-ok"/></svg><span class="td lk" style="left:1391.4px">88</span><span class="sq" style="left:1505px;background:#74d4f0"></span><span class="td lk" style="left:1520.2px">888</span><span class="dv"></span><span class="sq" style="left:1576.6px;background:#e55cc7"></span><span class="td lk" style="left:1591.9px">888</span><span class="td" style="left:1665.4px">4</span></div>
<div class="abs" style="left:140.3px;top:1063.5px;font-size:15px;line-height:1;color:#ececec">1 to 12 of 21 rows</div>
<div class="psel" style="left:1396px;width:96px"></div>
<div class="abs ft" style="left:1406.2px">12 Rows</div>
<svg class="abs" style="left:1470px;top:1063px" width="14" height="12" viewBox="0 0 14 12"><path d="M2.2 3 L7.2 8.2 L12.2 3" stroke="#dcdcdc" stroke-width="2" fill="none"/></svg>
<div class="abs ft" style="left:1514.3px">Page</div>
<div class="psel" style="left:1550px;width:48px"></div>
<div class="abs ft" style="left:1560.4px">1</div>
<svg class="abs" style="left:1577px;top:1063px" width="14" height="12" viewBox="0 0 14 12"><path d="M2.2 3 L7.2 8.2 L12.2 3" stroke="#dcdcdc" stroke-width="2" fill="none"/></svg>
<div class="abs ft" style="left:1603.5px">of 2</div>
<div class="psel" style="left:1649px;width:30px"></div>
<div class="psel" style="left:1683.6px;width:29.4px"></div>
<svg class="abs" style="left:1657px;top:1063px" width="14" height="14" viewBox="0 0 14 14"><path d="M9.6 2.2 L4.8 7 L9.6 11.8" stroke="#e6e6e6" stroke-width="2" fill="none"/></svg>
<svg class="abs" style="left:1691.5px;top:1063px" width="14" height="14" viewBox="0 0 14 14"><path d="M4.4 2.2 L9.2 7 L4.4 11.8" stroke="#e6e6e6" stroke-width="2" fill="none"/></svg>
</body></html>
